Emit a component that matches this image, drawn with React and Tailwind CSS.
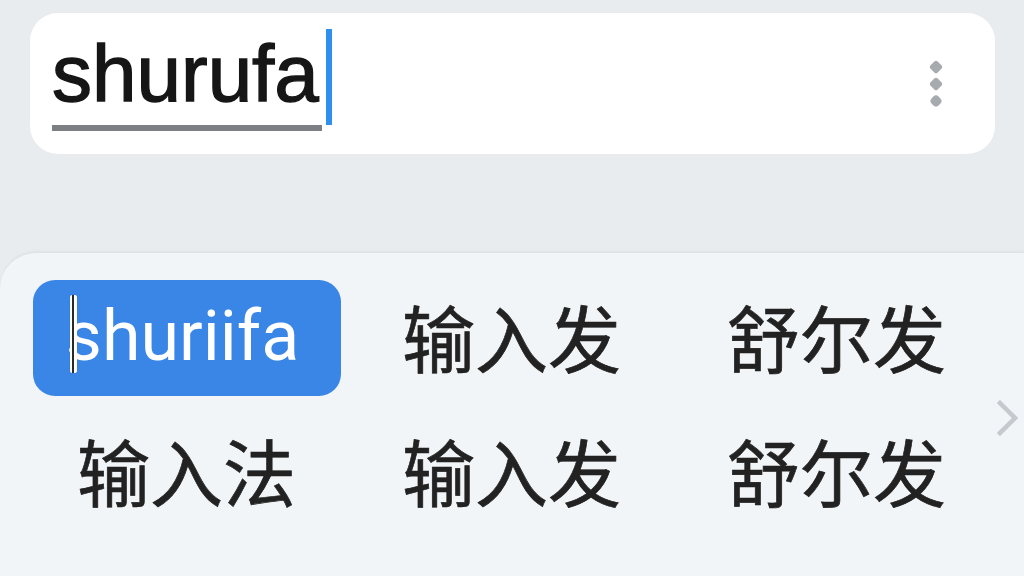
import React from "react";

const candidates = [
  { text: "shuriifa", selected: true },
  { text: "输入发" },
  { text: "舒尔发" },
  { text: "输入法" },
  { text: "输入发" },
  { text: "舒尔发" },
];

const cjk = { fontFamily: '"Noto Sans CJK SC", "Noto Sans", sans-serif' };

export default function App() {
  return (
    <div className="w-[1024px] h-[576px] overflow-hidden bg-[#e9ecef] flex flex-col">
      {/* input bar */}
      <div className="mt-[13px] ml-[30px] w-[965px] h-[141px] shrink-0 rounded-[28px] bg-white flex items-start pl-[22px] pr-[54px]">
        <div className="flex items-start mt-[16px]">
          <div className="mt-[5px] flex flex-col">
            <span
              className="text-[80px] leading-[80px] text-[#161616] [-webkit-text-stroke:1.4px_#161616]"
              style={{ fontFamily: '"Liberation Sans", Arial, sans-serif' }}
            >
              shurufa
            </span>
            <div className="mt-[11px] w-[270px] h-[6px] bg-[#7c7f84]" />
          </div>
          <div className="ml-[4px] w-[6px] h-[96px] bg-[#2e8fec]" />
        </div>
        <div className="ml-auto self-center flex flex-col items-center gap-[7px]">
          <span className="block w-[10px] h-[10px] rotate-45 rounded-[2px] bg-[#a7abb0]" />
          <span className="block w-[10px] h-[10px] rotate-45 rounded-[2px] bg-[#a7abb0]" />
          <span className="block w-[10px] h-[10px] rotate-45 rounded-[4px] bg-[#a7abb0]" />
        </div>
      </div>

      {/* candidate panel */}
      <div className="mt-[98px] flex-1 rounded-tl-[36px] bg-[#f2f5f7] border-t border-[#dfe2e5] shadow-[0_-1px_3px_rgba(0,0,0,0.04)] flex pl-[24px] pt-[27px]">
        <div className="grid grid-cols-[325px_325px_325px] grid-rows-[116px_116px] gap-y-[18px]">
          {candidates.map((c, i) =>
            c.selected ? (
              <div key={i} className="flex justify-center">
                <div className="w-[308px] h-[116px] rounded-[22px] bg-[#3a86e6] flex items-center justify-center pr-[8px]">
                  <span
                    className="relative text-[70px] leading-none text-white pb-[4px]"
                    style={{ fontFamily: "Roboto, sans-serif" }}
                  >
                    {c.text}
                    <span className="absolute left-[4px] top-[-6px] w-[7px] h-[78px] bg-white rounded-[2px] flex justify-center shadow-[0_0_1px_rgba(0,0,0,0.3)]">
                      <span className="block w-[2px] h-full bg-[#2a2a2a]" />
                    </span>
                  </span>
                </div>
              </div>
            ) : (
              <div key={i} className="flex items-center justify-center pb-[6px]">
                <span
                  className="text-[73px] leading-none text-[#222222] font-normal [-webkit-text-stroke:0.7px_#222222]"
                  style={cjk}
                >
                  {c.text}
                </span>
              </div>
            )
          )}
        </div>
        <div className="mt-[120px] -ml-[2px]">
          <svg width="22" height="36" viewBox="0 0 22 36" fill="none">
            <path
              d="M3 3 L18 18 L3 33"
              stroke="#c6c9cd"
              strokeWidth="4.5"
              strokeLinecap="square"
              strokeLinejoin="miter"
            />
          </svg>
        </div>
      </div>
    </div>
  );
}
